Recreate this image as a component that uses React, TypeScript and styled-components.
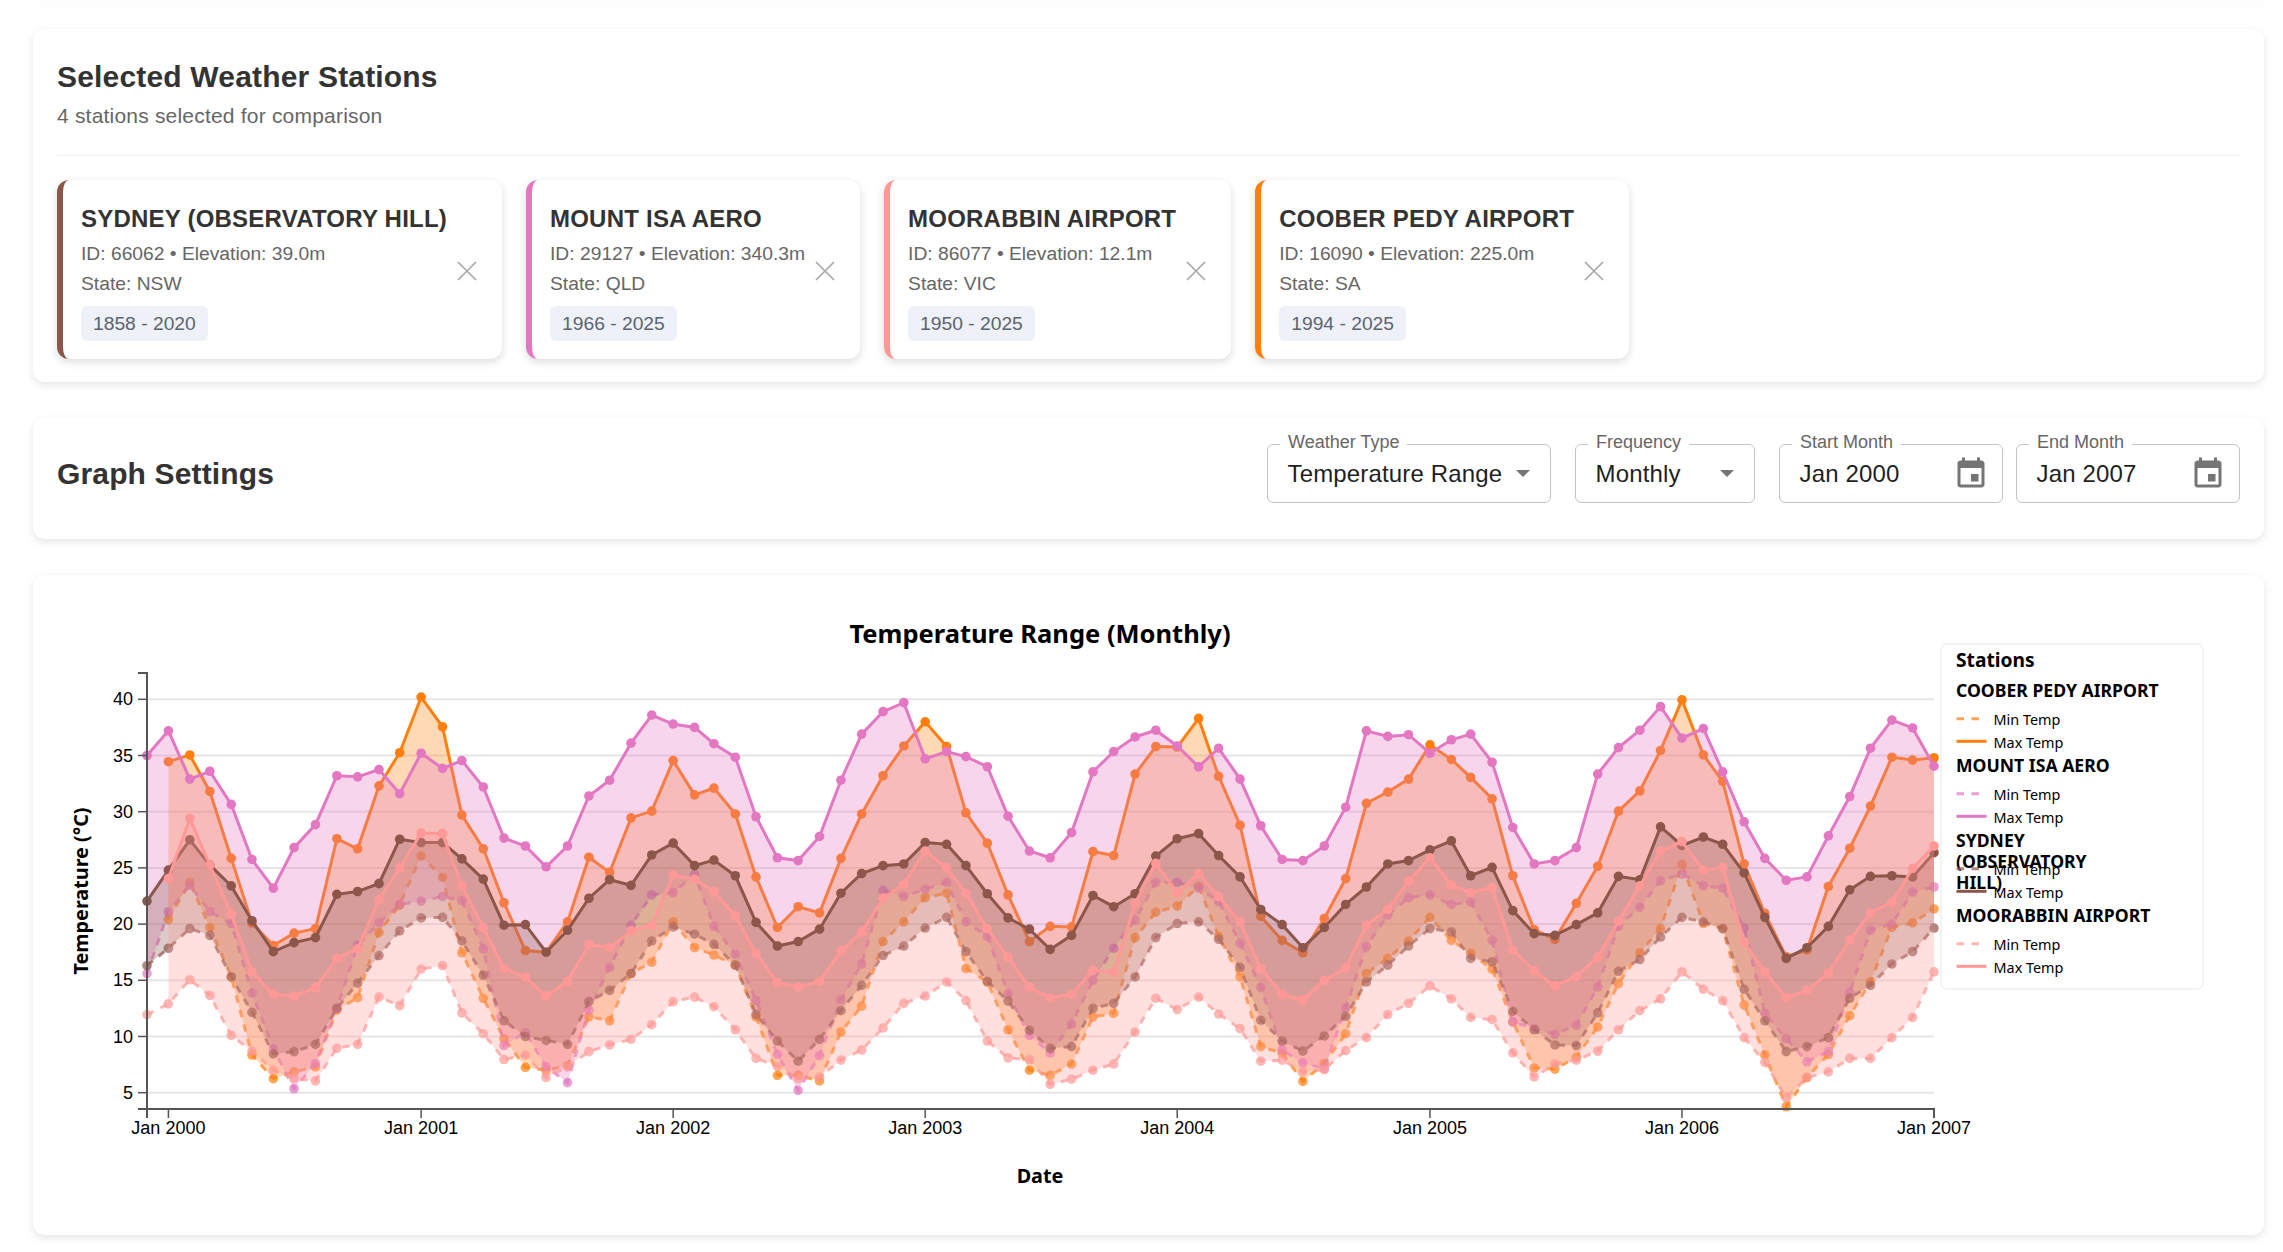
import React from 'react';
import styled, { createGlobalStyle } from 'styled-components';

const GlobalStyle = createGlobalStyle`
  html, body {
    margin: 0;
    padding: 0;
    background: #fff;
    font-family: "Liberation Sans", Arial, sans-serif;
  }
  * { box-sizing: border-box; }
`;

const CARD_SHADOW = '0 3px 8px rgba(0, 0, 0, 0.1)';

const Page = styled.main`
  display: flex;
  flex-direction: column;
  gap: 36px;
  padding: 0 19px 17px 33px;
`;

const TopEdge = styled.div`
  height: 1px;
  margin-bottom: -8px;
  box-shadow: ${CARD_SHADOW};
`;

const Card = styled.section`
  background: #fff;
  border-radius: 12px;
  box-shadow: ${CARD_SHADOW};
`;

const StationsCard = styled(Card)`
  padding: 24px 24px 23px;
`;

const SectionTitle = styled.h2`
  margin: 0;
  font-size: 30px;
  line-height: 48px;
  letter-spacing: 0.18px;
  font-weight: 700;
  color: #333;
`;

const SectionHint = styled.p`
  margin: 0;
  font-size: 21px;
  line-height: 30px;
  letter-spacing: 0.2px;
  color: #666;
`;

const Divider = styled.hr`
  margin: 24px 0;
  border: none;
  height: 1px;
  background: #efefef;
`;

const StationRow = styled.div`
  display: flex;
  gap: 24px;
`;

const StationCard = styled.article<{ $color: string }>`
  display: flex;
  align-items: center;
  height: 179px;
  padding: 24px 16px 18px 18px;
  background: #fff;
  border-left: 6px solid ${(p) => p.$color};
  border-radius: 12px;
  box-shadow: 0 3px 8px rgba(0, 0, 0, 0.14);
`;

const StationBody = styled.div`
  display: flex;
  flex-direction: column;
  align-items: flex-start;
`;

const StationName = styled.h3`
  margin: 0 0 5px;
  font-size: 24px;
  line-height: 30px;
  letter-spacing: 0.22px;
  font-weight: 700;
  color: #333;
  white-space: nowrap;
`;

const StationMeta = styled.div`
  font-size: 19.25px;
  line-height: 30px;
  color: #666;
  white-space: nowrap;
`;

const YearChip = styled.span`
  margin-top: 7px;
  height: 35px;
  padding: 0 12px;
  font-size: 19.25px;
  line-height: 35px;
  border-radius: 6px;
  background: #eef1f8;
  color: #5c6470;
`;

const RemoveButton = styled.button`
  display: flex;
  align-items: center;
  justify-content: center;
  flex: none;
  width: 39px;
  height: 39px;
  margin-bottom: 3px;
  padding: 0;
  border: none;
  background: transparent;
  color: #a8a8a8;
`;

const SettingsCard = styled(Card)`
  display: flex;
  align-items: center;
  justify-content: space-between;
  padding: 26px 24px 36px;
`;

const SettingsTitle = styled.h2`
  margin: 0;
  font-size: 30px;
  letter-spacing: 0.15px;
  font-weight: 700;
  color: #333;
`;

const Controls = styled.div`
  display: flex;
  gap: 24px;
`;

const DateGroup = styled.div`
  display: flex;
  gap: 13px;
`;

const Field = styled.div<{ $width: number; $icon?: boolean }>`
  position: relative;
  display: flex;
  align-items: center;
  justify-content: space-between;
  width: ${(p) => p.$width}px;
  height: 59px;
  padding: 0 ${(p) => (p.$icon ? 13 : 20)}px 0 19.5px;
  border: 1.5px solid #c4c4c4;
  border-radius: 6px;
  font-size: 24px;
  letter-spacing: 0.15px;
  color: #1f1f1f;
`;

const FieldLabel = styled.span`
  position: absolute;
  top: -13px;
  left: 12px;
  padding: 0 8px;
  background: #fff;
  font-size: 18px;
  line-height: 21px;
  letter-spacing: 0;
  color: #666;
`;

const Caret = styled.span`
  width: 0;
  height: 0;
  border-left: 7.5px solid transparent;
  border-right: 7.5px solid transparent;
  border-top: 7.5px solid #757575;
`;

const ChartCard = styled(Card)`
  padding: 24px;
`;

const ChartSvg = styled.svg`
  display: block;
  width: 2183px;
  height: 612px;
`;

const ChartTitle = styled.text`
  font-family: "Noto Sans", "Open Sans", sans-serif;
  font-size: 25.5px;
  font-weight: 700;
  text-anchor: middle;
  fill: #000;
`;

const AxisTitle = styled.text`
  font-family: "Noto Sans", "Open Sans", sans-serif;
  font-size: 19.8px;
  font-weight: 700;
  text-anchor: middle;
  fill: #000;
`;

const TickLabel = styled.text<{ $anchor: string }>`
  font-family: "Liberation Sans", Arial, sans-serif;
  font-size: 18px;
  text-anchor: ${(p) => p.$anchor};
  fill: #000;
`;

const GridLine = styled.line`
  stroke: #e6e6e6;
  stroke-width: 2;
`;

const AxisPath = styled.path<{ $heavy?: boolean }>`
  fill: none;
  stroke: #555;
  stroke-width: ${(p) => (p.$heavy ? 2 : 1.5)};
`;

const LegendFrame = styled.rect`
  fill: #fff;
  stroke: #f0f0f0;
  stroke-width: 1.5;
`;

const LegendTitle = styled.text`
  font-family: "Noto Sans", "Open Sans", sans-serif;
  font-size: 19.2px;
  font-weight: 700;
  fill: #000;
`;

const LegendHeading = styled.text`
  font-family: "Noto Sans", "Open Sans", sans-serif;
  font-size: 17.6px;
  font-weight: 700;
  fill: #000;
`;

const LegendLabel = styled.text`
  font-family: "Noto Sans", "Open Sans", sans-serif;
  font-size: 14.4px;
  fill: #000;
`;

type Series = {
  name: string;
  legendLines: string[];
  color: string;
  min: (number | null)[];
  max: (number | null)[];
};

// first point is Dec 1999, then every month to Jan 2007
const coober: Series = {
  name: 'COOBER PEDY AIRPORT',
  legendLines: ['COOBER PEDY AIRPORT'],
  color: '#ff7f0e',
  min: [
    null,
    20.4, 23.7, 19.7, 15.3, 8.35, 6.25, 6.85, 7.3, 12.35, 13.45, 19.25, 21.7,
    26.05, 24.15, 17.45, 13.4, 9.8, 7.25, 7.0, 7.4, 11.75, 11.4, 15.6, 16.6,
    20.2, 17.9, 17.25, 16.35, 11.75, 6.55, 6.55, 6.05, 10.4, 12.7, 18.45, 20.2,
    22.35, 22.75, 16.05, 14.85, 10.6, 7.0, 6.55, 7.55, 11.75, 12.05, 18.8, 21.05,
    21.6, 23.35, 18.9, 15.3, 9.1, 8.5, 6.0, 7.6, 10.25, 15.6, 16.95, 18.5,
    20.6, 18.55, 17.4, 16.0, 11.3, 7.2, 7.1, 8.15, 10.85, 14.7, 17.45, 19.6,
    25.3, 20.05, 19.6, 12.8, 8.35, 3.75, 6.35, 8.4, 11.85, 14.85, 19.7, 20.1,
    21.35,
  ],
  max: [
    null,
    34.45, 35.05, 31.8, 25.85, 20.1, 18.1, 19.2, 19.6, 27.6, 26.7, 32.3, 35.25,
    40.2, 37.55, 29.7, 26.7, 21.9, 17.65, 17.5, 20.2, 25.95, 24.6, 29.45, 30.05,
    34.55, 31.5, 32.1, 29.8, 24.2, 19.7, 21.55, 21.0, 25.85, 29.8, 33.2, 35.85,
    38.0, 35.8, 29.9, 27.2, 22.6, 18.45, 19.8, 19.75, 26.45, 26.1, 33.35, 35.8,
    35.75, 38.3, 33.15, 28.8, 20.7, 18.55, 17.45, 20.5, 24.05, 30.75, 31.75, 32.9,
    35.95, 34.65, 33.05, 31.15, 24.3, 19.5, 18.65, 21.85, 25.15, 30.05, 31.85, 35.45,
    39.95, 35.05, 32.7, 25.35, 20.95, 17.1, 17.7, 23.35, 26.75, 30.5, 34.85, 34.6,
    34.8,
  ],
};

const mountIsa: Series = {
  name: 'MOUNT ISA AERO',
  legendLines: ['MOUNT ISA AERO'],
  color: '#e377c2',
  min: [
    15.6,
    21.1, 23.45, 21.1, 20.05, 13.85, 8.9, 5.35, 7.6, 12.5, 18.1, 20.1, 21.75,
    22.05, 22.45, 22.1, 17.8, 9.2, 10.35, 7.3, 5.9, 12.35, 16.15, 19.9, 22.6,
    22.8, 24.4, 19.8, 17.3, 13.2, 8.4, 5.2, 8.3, 13.25, 16.45, 23.0, 22.45,
    23.1, 23.7, 20.2, 18.9, 13.8, 10.1, 8.55, 11.1, 15.0, 17.85, 20.35, 23.7,
    23.7, 23.2, 22.0, 18.3, 14.35, 8.8, 7.65, 7.15, 12.55, 18.0, 20.8, 22.35,
    22.6, 21.75, 21.95, 18.55, 11.3, 10.7, 10.2, 11.0, 14.4, 19.8, 21.5, 23.85,
    24.45, 23.4, 23.2, 19.65, 12.05, 9.8, 7.75, 8.65, 13.9, 19.45, 20.0, 22.85,
    23.3,
  ],
  max: [
    35.0,
    37.2, 32.9, 33.6, 30.65, 25.75, 23.2, 26.8, 28.85, 33.2, 33.1, 33.75, 31.6,
    35.2, 33.85, 34.55, 32.2, 27.65, 26.95, 25.1, 26.95, 31.4, 32.8, 36.1, 38.6,
    37.8, 37.5, 36.05, 34.85, 29.55, 25.9, 25.65, 27.8, 32.8, 36.9, 38.9, 39.7,
    34.7, 35.35, 34.9, 34.0, 29.6, 26.5, 25.9, 28.15, 33.55, 35.35, 36.65, 37.25,
    35.85, 34.0, 35.65, 32.9, 28.75, 25.75, 25.65, 26.95, 30.4, 37.2, 36.7, 36.85,
    35.2, 36.4, 36.9, 34.4, 28.6, 25.35, 25.65, 26.8, 33.35, 35.7, 37.25, 39.35,
    36.55, 37.4, 33.55, 29.1, 25.85, 23.9, 24.2, 27.85, 31.35, 35.65, 38.15, 37.45,
    34.05,
  ],
};

const sydney: Series = {
  name: 'SYDNEY (OBSERVATORY HILL)',
  legendLines: ['SYDNEY', '(OBSERVATORY', 'HILL)'],
  color: '#8c564b',
  min: [
    16.3,
    17.85, 19.6, 19.0, 15.3, 12.15, 8.45, 8.65, 9.3, 12.5, 14.75, 17.2, 19.4,
    20.55, 20.6, 18.5, 15.45, 11.4, 10.0, 9.65, 9.3, 13.1, 14.1, 15.6, 18.5,
    19.75, 19.1, 18.2, 16.35, 11.95, 9.6, 7.8, 9.75, 12.3, 14.55, 17.2, 18.05,
    19.65, 20.6, 17.55, 14.9, 13.15, 10.55, 8.95, 9.1, 12.5, 12.95, 15.3, 18.8,
    20.05, 20.2, 18.65, 16.15, 11.45, 9.6, 8.7, 10.05, 11.8, 14.85, 16.35, 18.05,
    19.6, 19.3, 16.95, 16.65, 12.25, 10.6, 9.25, 9.2, 12.1, 15.8, 16.85, 18.85,
    20.6, 20.2, 19.6, 14.2, 11.4, 8.65, 9.1, 9.9, 13.4, 14.55, 16.45, 17.55,
    19.65,
  ],
  max: [
    22.05,
    24.8, 27.5, 25.25, 23.4, 20.3, 17.55, 18.35, 18.8, 22.65, 22.9, 23.6, 27.55,
    27.25, 27.25, 25.8, 24.0, 19.9, 19.95, 17.5, 19.45, 22.3, 23.95, 23.45, 26.15,
    27.2, 25.2, 25.7, 24.3, 20.15, 18.05, 18.45, 19.55, 22.75, 24.5, 25.2, 25.35,
    27.25, 27.1, 25.2, 22.7, 20.55, 19.55, 17.75, 19.0, 22.55, 21.55, 22.7, 26.05,
    27.6, 28.05, 26.1, 24.2, 21.3, 19.95, 17.9, 19.7, 21.75, 23.3, 25.35, 25.65,
    26.6, 27.4, 24.3, 25.05, 21.2, 19.15, 19.0, 19.95, 21.0, 24.25, 23.95, 28.65,
    27.0, 27.75, 27.1, 24.55, 20.6, 16.95, 17.9, 19.8, 23.05, 24.25, 24.3, 24.2,
    26.35,
  ],
};

const moorabbin: Series = {
  name: 'MOORABBIN AIRPORT',
  legendLines: ['MOORABBIN AIRPORT'],
  color: '#ff9896',
  min: [
    11.95,
    12.9, 15.05, 13.65, 10.1, 8.7, 7.0, 6.25, 6.05, 8.95, 9.3, 13.5, 12.75,
    16.0, 16.3, 12.1, 10.25, 7.95, 8.35, 6.35, 7.3, 8.65, 9.25, 9.75, 11.05,
    13.1, 13.5, 12.65, 10.6, 8.05, 7.35, 6.25, 6.4, 7.9, 8.8, 10.75, 12.95,
    13.6, 14.85, 13.2, 9.6, 8.1, 7.95, 5.75, 6.2, 7.0, 7.55, 10.4, 13.4,
    12.4, 13.5, 12.0, 10.7, 7.8, 7.9, 6.85, 7.05, 8.75, 9.9, 11.95, 12.95,
    14.5, 13.35, 11.7, 11.5, 8.55, 6.4, 7.55, 7.9, 8.7, 10.6, 12.3, 13.35,
    15.75, 14.2, 13.2, 9.9, 7.7, 4.55, 6.35, 6.85, 8.05, 8.05, 9.9, 11.7,
    15.75,
  ],
  max: [
    null,
    24.05, 29.4, 25.25, 20.9, 15.75, 13.75, 13.6, 14.35, 16.95, 17.8, 22.2, 25.0,
    28.1, 28.05, 23.4, 19.7, 16.05, 15.3, 13.6, 14.9, 18.2, 17.9, 19.4, 19.9,
    24.35, 24.0, 22.9, 20.75, 17.4, 14.8, 14.4, 14.9, 17.6, 19.3, 22.3, 23.55,
    26.5, 25.0, 22.75, 19.6, 17.05, 14.4, 13.45, 13.75, 15.9, 15.75, 21.85, 25.4,
    22.75, 24.5, 22.45, 20.2, 16.05, 13.75, 13.25, 15.0, 16.1, 19.9, 21.3, 23.8,
    25.9, 23.5, 22.8, 23.25, 17.7, 15.85, 14.5, 15.35, 17.05, 20.25, 23.4, 26.5,
    27.35, 24.8, 25.05, 18.4, 15.75, 13.45, 14.1, 15.65, 18.6, 21.0, 21.95, 24.95,
    26.95,
  ],
};

const seriesList = [coober, mountIsa, sydney, moorabbin];

const stations = [
  { series: sydney, id: 66062, elevation: '39.0', state: 'NSW', years: '1858 - 2020' },
  { series: mountIsa, id: 29127, elevation: '340.3', state: 'QLD', years: '1966 - 2025' },
  { series: moorabbin, id: 86077, elevation: '12.1', state: 'VIC', years: '1950 - 2025' },
  { series: coober, id: 16090, elevation: '225.0', state: 'SA', years: '1994 - 2025' },
];

const PLOT = { left: 90, right: 1877, top: 74, bottom: 510 };
const START = Date.UTC(1999, 11, 1);
const END = Date.UTC(2007, 0, 1);
const Y_TICKS = [5, 10, 15, 20, 25, 30, 35, 40];
const YEARS = [2000, 2001, 2002, 2003, 2004, 2005, 2006, 2007];

const xAt = (time: number) =>
  PLOT.left + ((time - START) / (END - START)) * (PLOT.right - PLOT.left);
const xForIndex = (i: number) => xAt(Date.UTC(1999, 11 + i, 1));
const yAt = (value: number) => 493.7 - (value - 5) * 11.24;

const linePath = (values: (number | null)[]) =>
  values
    .map((v, i) => (v === null ? '' : `${xForIndex(i)},${yAt(v)}`))
    .filter(Boolean)
    .join(' L');

const areaPath = (s: Series) => {
  const idx = s.min.map((_, i) => i).filter((i) => s.min[i] !== null && s.max[i] !== null);
  const top = idx.map((i) => `${xForIndex(i)},${yAt(s.max[i] as number)}`);
  const bottom = idx.reverse().map((i) => `${xForIndex(i)},${yAt(s.min[i] as number)}`);
  return `M${top.join(' L')} L${bottom.join(' L')} Z`;
};

function SeriesLayer({ series }: { series: Series }) {
  const dots = (values: (number | null)[], opacity: number) =>
    values.map((v, i) =>
      v === null ? null : (
        <circle key={i} cx={xForIndex(i)} cy={yAt(v)} r={4.8} fill={series.color} opacity={opacity} />
      ),
    );
  return (
    <g>
      <path d={areaPath(series)} fill={series.color} fillOpacity={0.3} />
      <path
        d={`M${linePath(series.min)}`}
        fill="none"
        stroke={series.color}
        strokeWidth={3}
        strokeDasharray="7.5 7.5"
        opacity={0.7}
      />
      <path d={`M${linePath(series.max)}`} fill="none" stroke={series.color} strokeWidth={3} />
      {dots(series.min, 0.7)}
      {dots(series.max, 1)}
    </g>
  );
}

function Legend() {
  return (
    <g>
      <LegendFrame x={1884} y={45} width={262} height={345} rx={6} />
      <LegendTitle x={1899} y={67.7}>
        Stations
      </LegendTitle>
      {seriesList.map((s, i) => {
        const top = 75 * i;
        return (
          <g key={s.name} transform={`translate(1899 ${top})`}>
            {s.legendLines.map((line, n) => (
              <LegendHeading key={line} x={0} y={98.3 + n * 21}>
                {line}
              </LegendHeading>
            ))}
            <line x1={0.5} x2={30.5} y1={119.7} y2={119.7} stroke={s.color} strokeWidth={3} strokeDasharray="7.5 7.5" opacity={0.7} />
            <LegendLabel x={37.5} y={126}>
              Min Temp
            </LegendLabel>
            <line x1={0.5} x2={30.5} y1={142.3} y2={142.3} stroke={s.color} strokeWidth={3} />
            <LegendLabel x={37.5} y={149}>
              Max Temp
            </LegendLabel>
          </g>
        );
      })}
    </g>
  );
}

function TemperatureChart() {
  const { left, right, top, bottom } = PLOT;
  return (
    <ChartSvg viewBox="0 0 2183 612">
      <ChartTitle x={983} y={44}>
        Temperature Range (Monthly)
      </ChartTitle>
      {Y_TICKS.map((t) => (
        <GridLine key={t} x1={left} x2={right} y1={yAt(t)} y2={yAt(t)} />
      ))}
      {seriesList.map((s) => (
        <SeriesLayer key={s.name} series={s} />
      ))}
      <AxisPath $heavy d={`M${left - 9},${top} H${left} V${bottom} H${left - 9}`} />
      {Y_TICKS.map((t) => (
        <g key={t}>
          <AxisPath d={`M${left - 9},${yAt(t)} H${left}`} />
          <TickLabel $anchor="end" x={left - 14} y={yAt(t) + 6}>
            {t}
          </TickLabel>
        </g>
      ))}
      <AxisPath $heavy d={`M${left},${bottom + 9} V${bottom} H${right} V${bottom + 9}`} />
      {YEARS.map((y) => {
        const x = xAt(Date.UTC(y, 0, 1));
        return (
          <g key={y}>
            <AxisPath d={`M${x},${bottom} V${bottom + 9}`} />
            <TickLabel $anchor="middle" x={x} y={bottom + 25}>
              Jan {y}
            </TickLabel>
          </g>
        );
      })}
      <AxisTitle x={983} y={584}>
        Date
      </AxisTitle>
      <AxisTitle transform="translate(31 292) rotate(-90)">Temperature (°C)</AxisTitle>
      <Legend />
    </ChartSvg>
  );
}

const CloseIcon = () => (
  <svg width="20" height="20" viewBox="0 0 20 20" fill="none" stroke="currentColor" strokeWidth="1.7">
    <path d="M1 1L19 19M19 1L1 19" />
  </svg>
);

const CalendarIcon = () => (
  <svg width="36" height="36" viewBox="0 0 24 24" fill="#757575">
    <path d="M17 12h-5v5h5v-5zM16 1v2H8V1H6v2H5c-1.11 0-1.99.9-1.99 2L3 19c0 1.1.89 2 2 2h14c1.1 0 2-.9 2-2V5c0-1.1-.9-2-2-2h-1V1h-2zm3 18H5V8h14v11z" />
  </svg>
);

export default function App(): JSX.Element {
  return (
    <>
      <GlobalStyle />
      <Page>
        <TopEdge />
        <StationsCard>
          <SectionTitle>Selected Weather Stations</SectionTitle>
          <SectionHint>4 stations selected for comparison</SectionHint>
          <Divider />
          <StationRow>
            {stations.map((st) => (
              <StationCard key={st.id} $color={st.series.color}>
                <StationBody>
                  <StationName>{st.series.name}</StationName>
                  <StationMeta>
                    ID: {st.id} • Elevation: {st.elevation}m
                  </StationMeta>
                  <StationMeta>State: {st.state}</StationMeta>
                  <YearChip>{st.years}</YearChip>
                </StationBody>
                <RemoveButton aria-label="Remove station">
                  <CloseIcon />
                </RemoveButton>
              </StationCard>
            ))}
          </StationRow>
        </StationsCard>

        <SettingsCard>
          <SettingsTitle>Graph Settings</SettingsTitle>
          <Controls>
            <Field $width={284}>
              <FieldLabel>Weather Type</FieldLabel>
              Temperature Range
              <Caret />
            </Field>
            <Field $width={180}>
              <FieldLabel>Frequency</FieldLabel>
              Monthly
              <Caret />
            </Field>
            <DateGroup>
              <Field $width={224} $icon>
                <FieldLabel>Start Month</FieldLabel>
                Jan 2000
                <CalendarIcon />
              </Field>
              <Field $width={224} $icon>
                <FieldLabel>End Month</FieldLabel>
                Jan 2007
                <CalendarIcon />
              </Field>
            </DateGroup>
          </Controls>
        </SettingsCard>

        <ChartCard>
          <TemperatureChart />
        </ChartCard>
      </Page>
    </>
  );
}
